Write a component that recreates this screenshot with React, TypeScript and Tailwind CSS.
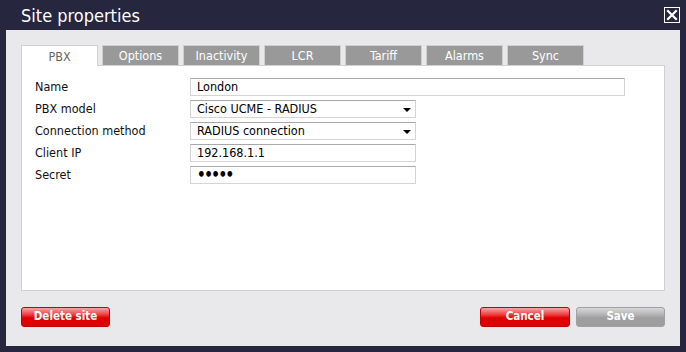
import React from "react";

const font = { fontFamily: '"DejaVu Sans Condensed", "DejaVu Sans", sans-serif' };

const tabs = ["PBX", "Options", "Inactivity", "LCR", "Tariff", "Alarms", "Sync"];

function Caret() {
  return (
    <svg width="8" height="4" viewBox="0 0 8 4" className="shrink-0 mr-[1px] mt-[2px]">
      <polygon points="0,0 8,0 4,4" fill="#000" />
    </svg>
  );
}

function Row({ label, children }: { label: string; children: React.ReactNode }) {
  return (
    <div className="flex items-center h-[18px]">
      <div className="w-[155px] text-[12.5px] text-[#111]">{label}</div>
      {children}
    </div>
  );
}

function TextBox({ value, w, dots }: { value: string; w: string; dots?: boolean }) {
  return (
    <div
      className={`${w} h-[18px] bg-white border border-[#d4d4d4] border-t-[#a9a9a9] flex items-center pl-[6px] text-black ${
        dots ? "text-[15px] tracking-[-1.5px] font-bold" : "text-[12.5px]"
      }`}
    >
      {value}
    </div>
  );
}

function SelectBox({ value }: { value: string }) {
  return (
    <div className="w-[226px] h-[18px] bg-white border border-[#d4d4d4] border-t-[#a9a9a9] flex items-center justify-between pl-[6px] pr-[3px] text-[12.5px] text-black">
      <span>{value}</span>
      <Caret />
    </div>
  );
}

const redBtn =
  "h-[20px] rounded-[3px] border border-[#c00000] bg-[linear-gradient(to_bottom,#f7a5a5_0%,#ee4545_35%,#e00000_55%,#e00000_100%)] text-white font-bold text-[11.5px] leading-none";

export default function App() {
  return (
    <div className="w-[686px] h-[352px] bg-[#26263f] flex flex-col" style={font}>
      <div className="h-[30px] flex items-center justify-between pl-[21px] pr-[6px]">
        <span className="text-white text-[18px] leading-none mt-[2px]">Site properties</span>
        <svg width="16" height="16" viewBox="0 0 16 16">
          <rect x="0.5" y="0.5" width="15" height="15" fill="none" stroke="#fff" strokeWidth="1" />
          <path d="M4 4 L12 12 M12 4 L4 12" stroke="#fff" strokeWidth="2.2" strokeLinecap="square" />
        </svg>
      </div>
      <div className="mx-[6px] w-[674px] h-[316px] bg-[#e9e9eb] pl-[15px] pt-[15px] flex flex-col">
        <div className="flex gap-[4px] h-[20px]">
          {tabs.map((t, i) =>
            i === 0 ? (
              <div
                key={t}
                className="w-[77px] h-[21px] bg-white border border-[#d0d0d0] border-b-0 flex items-center justify-center pt-[2px] text-[12.5px] text-[#666] relative z-10"
              >
                {t}
              </div>
            ) : (
              <div
                key={t}
                className="w-[77px] h-[20px] bg-[#999999] border border-[#cfcfcf] border-b-0 flex items-center justify-center pt-[2px] text-[12.5px] text-white"
              >
                {t}
              </div>
            )
          )}
        </div>
        <div className="w-[644px] h-[226px] bg-white border border-[#d0d0d0] pl-[13px] pt-[12px] flex flex-col gap-[4px]">
          <Row label="Name">
            <TextBox value="London" w="w-[435px]" />
          </Row>
          <Row label="PBX model">
            <SelectBox value="Cisco UCME - RADIUS" />
          </Row>
          <Row label="Connection method">
            <SelectBox value="RADIUS connection" />
          </Row>
          <Row label="Client IP">
            <TextBox value="192.168.1.1" w="w-[226px]" />
          </Row>
          <Row label="Secret">
            <TextBox value="•••••" w="w-[226px]" dots />
          </Row>
        </div>
        <div className="flex mt-[16px] pr-[15px] items-center">
          <button className={`w-[89px] ${redBtn}`}>Delete site</button>
          <div className="flex-1" />
          <button className={`w-[90px] ${redBtn}`}>Cancel</button>
          <button className="ml-[6px] w-[89px] h-[20px] rounded-[3px] border border-[#a0a0a0] bg-[linear-gradient(to_bottom,#d8d8d8_0%,#b6b6b6_35%,#9e9e9e_55%,#9e9e9e_100%)] text-white font-bold text-[11.5px] leading-none">
            Save
          </button>
        </div>
      </div>
    </div>
  );
}
